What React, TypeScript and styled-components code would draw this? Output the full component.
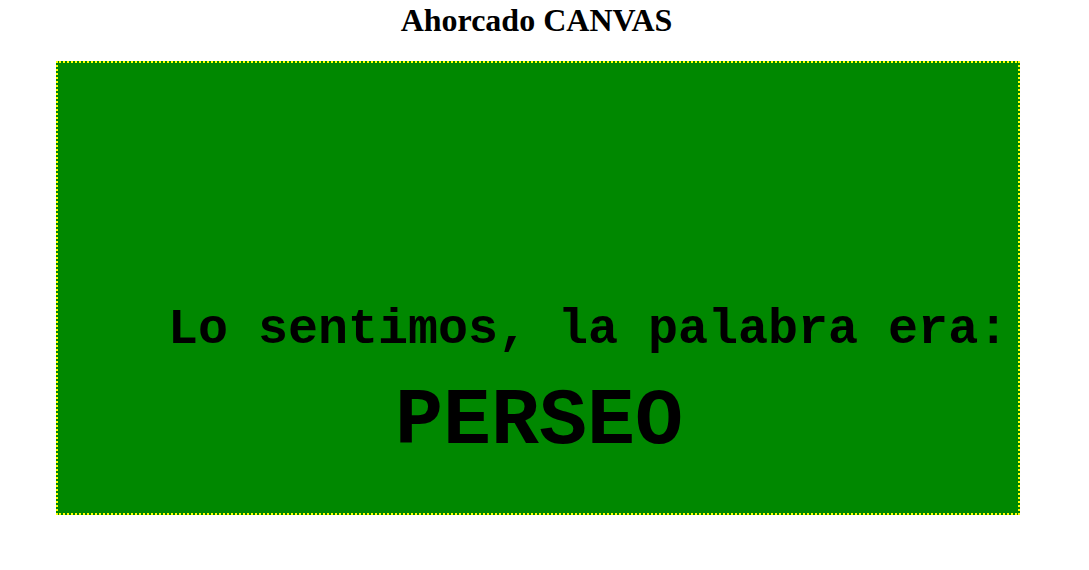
import React from "react";
import styled, { createGlobalStyle } from "styled-components";

const Global = createGlobalStyle`
  html, body { margin: 0; padding: 0; background: #ffffff; }
`;

const Page = styled.div`
  width: 964px;
  margin-left: 56px;
  display: flex;
  flex-direction: column;
`;

const Title = styled.h1`
  margin: 0;
  padding-top: 2px;
  padding-right: 3px;
  font-family: "Liberation Serif", serif;
  font-weight: bold;
  font-size: 32px;
  line-height: 37px;
  text-align: center;
  color: #000;
`;

const Board = styled.div`
  margin-top: 22px;
  width: 964px;
  height: 454px;
  box-sizing: border-box;
  border: 2px dotted #ffff00;
  background: #008800;
  display: flex;
  flex-direction: column;
  padding-top: 242px;
  font-family: "Liberation Mono", monospace;
  font-weight: bold;
  color: #000;
  white-space: pre;
`;

const Line = styled.div<{ $size: number; $indent: number; $gap: number }>`
  font-size: ${(p) => p.$size}px;
  line-height: ${(p) => p.$size}px;
  margin-left: ${(p) => p.$indent}px;
  margin-top: ${(p) => p.$gap}px;
`;

export default function App() {
  return (
    <>
      <Global />
      <Page>
        <Title>Ahorcado CANVAS</Title>
        <Board>
          <Line $size={50} $indent={110} $gap={0}>Lo sentimos, la palabra era:</Line>
          <Line $size={80} $indent={337} $gap={27}>PERSEO</Line>
        </Board>
      </Page>
    </>
  );
}
